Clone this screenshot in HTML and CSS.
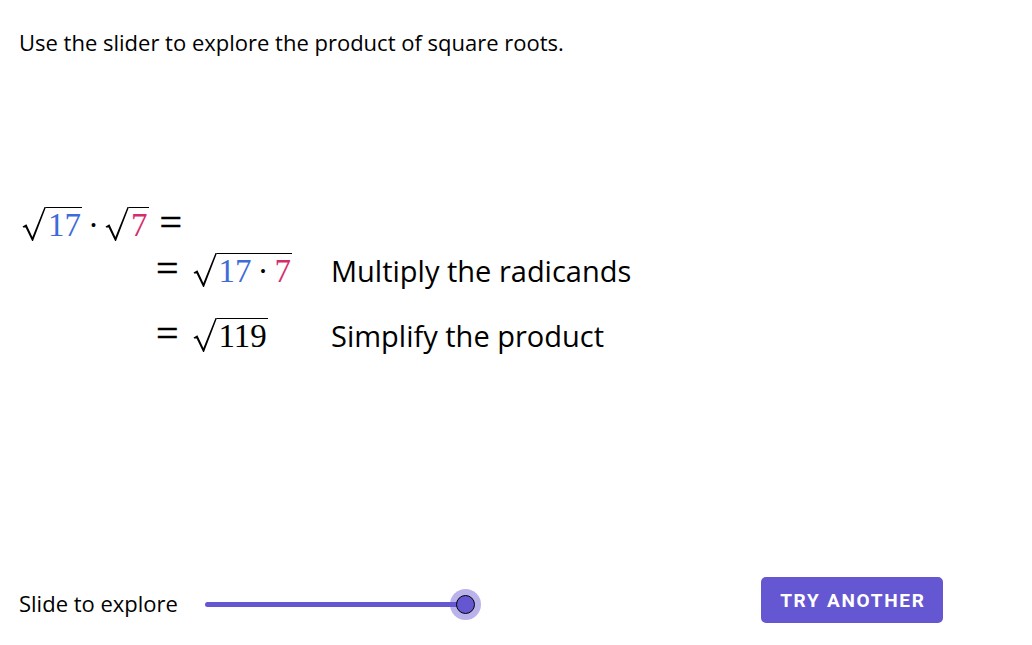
FILE: index.html
```html
<!DOCTYPE html>
<html lang="en">
<head>
<meta charset="utf-8">
<title>Product of square roots</title>
<link rel="stylesheet" href="styles.css">
</head>
<body>
<main class="page">
  <p class="intro">Use the slider to explore the product of square roots.</p>

  <section class="math">
    <div class="row row-first">
      <span class="sqrt">
        <svg class="radical" viewBox="0 0 24 34" preserveAspectRatio="none"><polygon points="0.6,19.6 4.4,17.3 10.4,30.0 22.5,0 24,0 11.0,34 10.1,34 3.6,20.4 1.1,20.5"/></svg>
        <span class="radicand"><span class="blue">17</span></span>
      </span>
      <span class="op">·</span>
      <span class="sqrt">
        <svg class="radical" viewBox="0 0 24 34" preserveAspectRatio="none"><polygon points="0.6,19.6 4.4,17.3 10.4,30.0 22.5,0 24,0 11.0,34 10.1,34 3.6,20.4 1.1,20.5"/></svg>
        <span class="radicand"><span class="pink">7</span></span>
      </span>
      <span class="eq">=</span>
    </div>

    <div class="row row-step">
      <span class="expr">
        <span class="eq eq-lead">=</span>
        <span class="sqrt">
          <svg class="radical" viewBox="0 0 24 34" preserveAspectRatio="none"><polygon points="0.6,19.6 4.4,17.3 10.4,30.0 22.5,0 24,0 11.0,34 10.1,34 3.6,20.4 1.1,20.5"/></svg>
          <span class="radicand"><span class="blue">17</span><span class="op">·</span><span class="pink">7</span></span>
        </span>
      </span>
      <span class="note">Multiply the radicands</span>
    </div>

    <div class="row row-step">
      <span class="expr">
        <span class="eq eq-lead">=</span>
        <span class="sqrt">
          <svg class="radical" viewBox="0 0 24 34" preserveAspectRatio="none"><polygon points="0.6,19.6 4.4,17.3 10.4,30.0 22.5,0 24,0 11.0,34 10.1,34 3.6,20.4 1.1,20.5"/></svg>
          <span class="radicand">119</span>
        </span>
      </span>
      <span class="note">Simplify the product</span>
    </div>
  </section>

  <footer class="controls">
    <span class="label">Slide to explore</span>
    <div class="slider">
      <div class="track"></div>
      <div class="knob"><div class="knob-dot"></div></div>
    </div>
    <button class="btn" type="button">TRY ANOTHER</button>
  </footer>
</main>
</body>
</html>
```

FILE: styles.css
```css
* { box-sizing: border-box; }

html, body {
  margin: 0;
  padding: 0;
  background: #ffffff;
}

.page {
  width: 1032px;
  height: 645px;
  display: flex;
  flex-direction: column;
  color: #000;
  font-family: "Open Sans", "Liberation Sans", sans-serif;
}

.intro {
  margin: 0;
  padding: 30px 0 0 19px;
  font-size: 22px;
  line-height: 24px;
}

.math {
  margin-top: 153px;
  font-family: "Liberation Serif", serif;
  font-size: 33px;
}

.row {
  display: flex;
  align-items: baseline;
}

.row-first {
  padding-left: 22px;
  height: 46px;
}

.row-step {
  height: 65px;
}

.expr {
  display: inline-flex;
  align-items: baseline;
  width: 331px;
  padding-left: 156px;
}

.sqrt {
  display: inline-flex;
  align-items: stretch;
}

.radical {
  width: 24px;
  align-self: stretch;
  fill: #000;
}

.radicand {
  align-self: baseline;
  border-top: 1.5px solid #000;
  padding: 2.4px 1px 0 2px;
  line-height: 30px;
}

.blue { color: #3f6bd9; }
.pink { color: #d52d6c; }

.op {
  margin: 0 6px;
  line-height: 30px;
}

.eq {
  font-size: 40px;
  line-height: 30px;
  margin-left: 11px;
  -webkit-text-stroke: 0.4px #000;
}

.eq-lead {
  margin-left: 0;
  margin-right: 14px;
}

.note {
  font-family: "Open Sans", "Liberation Sans", sans-serif;
  font-size: 29px;
  line-height: 30px;
}

.controls {
  margin-top: auto;
  margin-bottom: 22px;
  height: 46px;
  display: flex;
  align-items: center;
  padding-left: 19px;
}

.label {
  width: 186px;
  font-size: 22px;
  padding-top: 6px;
}

.slider {
  display: flex;
  align-items: center;
  width: 276px;
  margin-top: 8px;
}

.track {
  width: 260px;
  height: 5px;
  border-radius: 3px;
  background: #6557d2;
}

.knob {
  margin-left: -15px;
  width: 31px;
  height: 31px;
  border-radius: 50%;
  background: rgba(101, 87, 210, 0.45);
  display: grid;
  place-items: center;
}

.knob-dot {
  width: 19px;
  height: 19px;
  border-radius: 50%;
  background: #6557d2;
  border: 1.4px solid #000;
}

.btn {
  margin-left: 280px;
  width: 182px;
  height: 46px;
  border: none;
  border-radius: 5px;
  background: #6557d2;
  color: #fff;
  font-family: "Roboto", "Liberation Sans", sans-serif;
  font-weight: 700;
  font-size: 19px;
  letter-spacing: 1.7px;
  text-indent: 1.7px;
  padding: 0;
}
```
